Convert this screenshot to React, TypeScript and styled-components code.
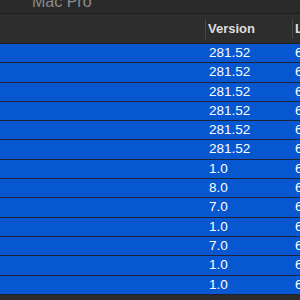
import styled, { createGlobalStyle } from "styled-components";

type Item = {
  id: number;
  version: string;
  modified: string;
};

const items: Item[] = [
  { id: 1, version: "281.52", modified: "6/13/19, 9:41 AM" },
  { id: 2, version: "281.52", modified: "6/13/19, 9:41 AM" },
  { id: 3, version: "281.52", modified: "6/13/19, 9:41 AM" },
  { id: 4, version: "281.52", modified: "6/13/19, 9:41 AM" },
  { id: 5, version: "281.52", modified: "6/13/19, 9:41 AM" },
  { id: 6, version: "281.52", modified: "6/13/19, 9:41 AM" },
  { id: 7, version: "1.0", modified: "6/13/19, 9:41 AM" },
  { id: 8, version: "8.0", modified: "6/13/19, 9:41 AM" },
  { id: 9, version: "7.0", modified: "6/13/19, 9:41 AM" },
  { id: 10, version: "1.0", modified: "6/13/19, 9:41 AM" },
  { id: 11, version: "7.0", modified: "6/13/19, 9:41 AM" },
  { id: 12, version: "1.0", modified: "6/13/19, 9:41 AM" },
  { id: 13, version: "1.0", modified: "6/13/19, 9:41 AM" },
];

const GlobalStyle = createGlobalStyle`
  html, body {
    margin: 0;
    padding: 0;
    background-color: #2b2b2b;
    font-family: "Liberation Sans", Arial, sans-serif;
    -webkit-font-smoothing: antialiased;
  }
`;

const StyledWindow = styled.div`
  width: 300px;
  height: 300px;
  overflow: hidden;
  background-color: #2b2b2b;
  display: flex;
  flex-direction: column;
`;

const StyledTitleBar = styled.div`
  height: 13px;
  flex-shrink: 0;
  overflow: hidden;
  padding-left: 32px;
  border-bottom: 1px solid #1d1d1d;
  background-color: #2a2a2a;
`;

const StyledTitle = styled.span`
  display: block;
  margin-top: -6.5px;
  font-size: 16px;
  line-height: 16px;
  color: #8c8c8c;
  white-space: nowrap;
`;

const StyledTable = styled.div`
  display: grid;
  grid-template-columns: 205px 87px 1fr;
`;

const StyledHeader = styled.div`
  display: contents;
`;

const StyledHeaderCell = styled.div`
  height: 29px;
  display: flex;
  align-items: center;
  background-color: #2d2d2d;
  border-bottom: 1px solid #1f1f1f;
  font-size: 13px;
  font-weight: bold;
  color: #dedede;
  white-space: nowrap;
  overflow: hidden;
`;

const StyledDivider = styled.span`
  width: 1px;
  height: 20px;
  margin-right: 2px;
  flex-shrink: 0;
  background-color: #474747;
`;

const StyledRow = styled.div`
  display: contents;
`;

const StyledCell = styled.div<{ $pad?: number }>`
  box-sizing: border-box;
  height: 19.3px;
  padding-left: ${p => p.$pad ?? 0}px;
  background-color: #0757d0;
  border-bottom: 1px solid #1b2436;
  font-size: 13.5px;
  line-height: 18.3px;
  color: #ffffff;
  white-space: nowrap;
  overflow: hidden;
`;

export default function App() {
  return (
    <StyledWindow>
      <GlobalStyle />
      <StyledTitleBar>
        <StyledTitle>Mac Pro</StyledTitle>
      </StyledTitleBar>
      <StyledTable>
        <StyledHeader>
          <StyledHeaderCell />
          <StyledHeaderCell>
            <StyledDivider />
            Version
          </StyledHeaderCell>
          <StyledHeaderCell>
            <StyledDivider />
            Last Modified
          </StyledHeaderCell>
        </StyledHeader>
        {items.map(item => (
          <StyledRow key={item.id}>
            <StyledCell />
            <StyledCell $pad={4}>{item.version}</StyledCell>
            <StyledCell $pad={3}>{item.modified}</StyledCell>
          </StyledRow>
        ))}
      </StyledTable>
    </StyledWindow>
  );
}
